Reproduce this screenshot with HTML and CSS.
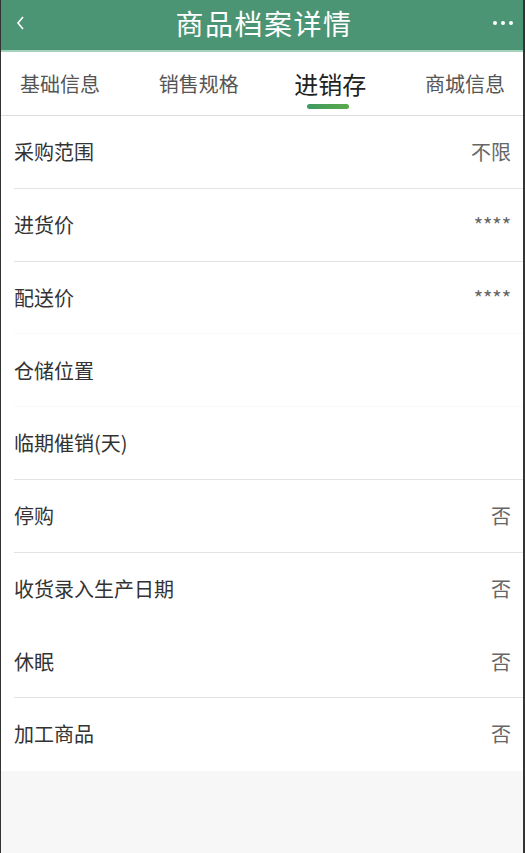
FILE: index.html
```html
<!DOCTYPE html>
<html lang="zh-CN">
<head>
    <meta charset="UTF-8">
    <meta name="viewport" content="width=device-width, initial-scale=1.0">
    <title>商品档案详情</title>
    <link rel="stylesheet" href="styles.css">
</head>
<body>
    <div class="page">
        <header class="top-bar">
            <span class="back">
                <svg width="12" height="16" viewBox="0 0 12 16"><path d="M8 2 L3 8 L8 14" fill="none" stroke="#fff" stroke-width="1.6"/></svg>
            </span>
            <h1>商品档案详情</h1>
            <span class="more"><i></i><i></i><i></i></span>
        </header>

        <nav class="tabs">
            <div class="tab">基础信息</div>
            <div class="tab">销售规格</div>
            <div class="tab active">进销存</div>
            <div class="tab">商城信息</div>
        </nav>

        <ul class="info-list">
            <li><span class="label">采购范围</span><span class="value">不限</span></li>
            <li><span class="label">进货价</span><span class="value">****</span></li>
            <li class="faint"><span class="label">配送价</span><span class="value">****</span></li>
            <li class="faint"><span class="label">仓储位置</span><span class="value"></span></li>
            <li><span class="label">临期催销(天)</span><span class="value"></span></li>
            <li><span class="label">停购</span><span class="value">否</span></li>
            <li class="none"><span class="label">收货录入生产日期</span><span class="value">否</span></li>
            <li><span class="label">休眠</span><span class="value">否</span></li>
            <li class="last"><span class="label">加工商品</span><span class="value">否</span></li>
        </ul>
    </div>
</body>
</html>
```

FILE: styles.css
```css
html, body {
    margin: 0;
    padding: 0;
    height: 100%;
}

body {
    font-family: "Noto Sans CJK SC", "Noto Sans", sans-serif;
    background-color: #333;
}

.page {
    margin: 0 2px 0 1px;
    min-height: 100%;
    background-color: #f7f7f7;
}

.top-bar {
    height: 50px;
    background-color: #4b9574;
    border-bottom: 2px solid #a6d2bd;
    display: flex;
    align-items: center;
    justify-content: space-between;
    padding: 0 10px 0 14px;
    color: #fff;
}

.top-bar h1 {
    margin: 0;
    font-size: 28px;
    font-weight: normal;
    letter-spacing: 1.5px;
    line-height: 46px;
    padding-bottom: 4px;
}

.back {
    display: flex;
    width: 24px;
    margin-top: -4px;
}

.more {
    display: flex;
    gap: 4px;
    width: 24px;
    justify-content: flex-end;
    margin-top: -4px;
}

.more i {
    width: 4px;
    height: 4px;
    border-radius: 50%;
    background-color: #fff;
}

.tabs {
    height: 63px;
    background-color: #fff;
    border-bottom: 1px solid #ddd;
    display: flex;
    align-items: center;
    justify-content: space-between;
    padding: 0 18px 0 19px;
}

.tab {
    font-size: 20px;
    color: #555;
    position: relative;
}

.tab.active {
    font-size: 24px;
    color: #222;
    margin-left: -3px;
}

.tab.active::after {
    content: "";
    position: absolute;
    left: 13px;
    right: 17px;
    bottom: -8px;
    height: 5px;
    border-radius: 3px;
    background: linear-gradient(90deg, #3f9a62, #5aa94a);
}

.info-list {
    list-style: none;
    margin: 0;
    padding: 0 0 0 13px;
    background-color: #fff;
}

.info-list li {
    height: 71.75px;
    display: flex;
    align-items: center;
    justify-content: space-between;
    padding-right: 12px;
    border-bottom: 1px solid #e2e2e2;
    font-size: 20px;
}

.info-list li.faint {
    border-bottom-color: #f9f9f9;
}

.info-list li.none,
.info-list li.last {
    border-bottom-color: #fff;
}

.label {
    color: #333;
}

.value {
    color: #666;
}
```
